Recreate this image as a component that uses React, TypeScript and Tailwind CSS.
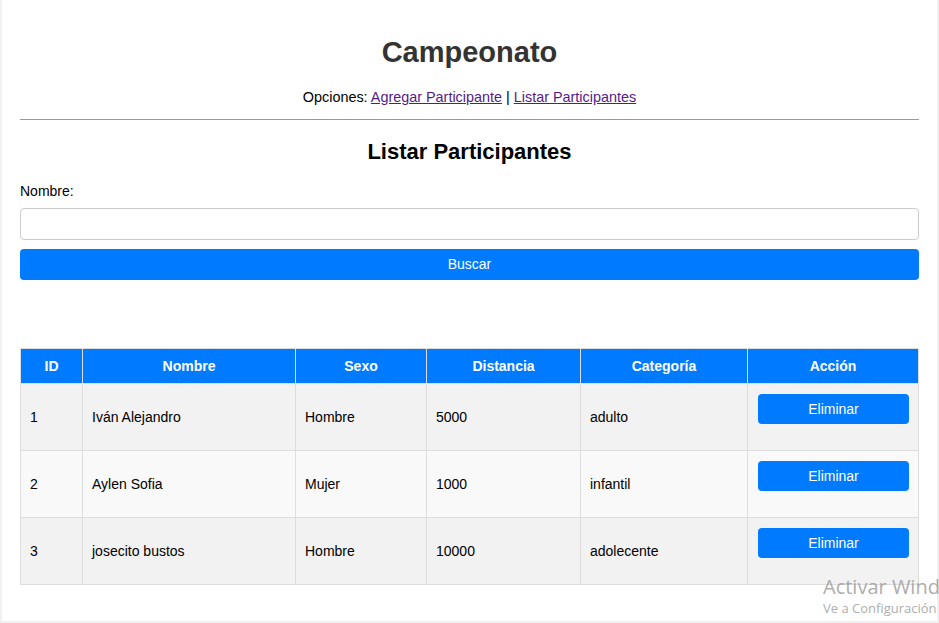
const participantes = [
  { id: 1, nombre: "Iván Alejandro", sexo: "Hombre", distancia: 5000, categoria: "adulto" },
  { id: 2, nombre: "Aylen Sofia", sexo: "Mujer", distancia: 1000, categoria: "infantil" },
  { id: 3, nombre: "josecito bustos", sexo: "Hombre", distancia: 10000, categoria: "adolecente" },
];

export default function App() {
  return (
    <div
      className="relative w-full h-[623px] overflow-hidden bg-[#f0f0f0] px-[2px]"
      style={{ fontFamily: '"Liberation Sans", Arial, sans-serif' }}
    >
      <div className="bg-white h-[621px] px-[18px] pt-[36px]">
        {/* HEADER */}
        <h1 className="text-center text-[29px] leading-[32px] font-bold text-[#333]">Campeonato</h1>
        <p className="mt-[21px] text-center text-[14.4px] leading-[16px] text-black">
          Opciones:{" "}
          <a href="#agregar" className="text-[#551a8b] underline">Agregar Participante</a>
          {" | "}
          <a href="#listar" className="text-[#551a8b] underline">Listar Participantes</a>
        </p>
        <hr className="mt-[14px] border-0 border-t border-[#999]" />

        {/* FORM */}
        <h2 className="mt-[19px] text-center text-[22px] leading-[26px] font-bold text-black">
          Listar Participantes
        </h2>
        <label className="block mt-[18px] text-[14px] leading-[16px] text-black">Nombre:</label>
        <input
          type="text"
          className="block w-full mt-[9px] h-[32px] rounded-[4px] border border-[#ccc] bg-white px-2 outline-none"
        />
        <button className="block w-full mt-[9px] h-[31px] rounded-[4px] bg-[#007bff] text-white text-[14px]">
          Buscar
        </button>

        {/* TABLE */}
        <table className="mt-[68px] w-full table-fixed border-collapse text-[14px] leading-[16px]">
          <colgroup>
            <col className="w-[62px]" />
            <col className="w-[213px]" />
            <col className="w-[131px]" />
            <col className="w-[154px]" />
            <col className="w-[167px]" />
            <col />
          </colgroup>
          <thead>
            <tr className="h-[35px] bg-[#007bff] text-white">
              {["ID", "Nombre", "Sexo", "Distancia", "Categoría", "Acción"].map((h) => (
                <th key={h} className="border border-[#ddd] px-[10px] font-bold text-center">
                  {h}
                </th>
              ))}
            </tr>
          </thead>
          <tbody className="text-black">
            {participantes.map((p, i) => (
              <tr key={p.id} className={i % 2 === 1 ? "bg-[#f9f9f9]" : "bg-[#f2f2f2]"}>
                <td className="border border-[#ddd] py-[10px] pl-[9px] pr-[10px] align-middle">{p.id}</td>
                <td className="border border-[#ddd] py-[10px] pl-[9px] pr-[10px] align-middle">{p.nombre}</td>
                <td className="border border-[#ddd] py-[10px] pl-[9px] pr-[10px] align-middle">{p.sexo}</td>
                <td className="border border-[#ddd] py-[10px] pl-[9px] pr-[10px] align-middle">{p.distancia}</td>
                <td className="border border-[#ddd] py-[10px] pl-[9px] pr-[10px] align-middle">{p.categoria}</td>
                <td className="border border-[#ddd] pt-[10px] pb-[10px] pl-[10px] pr-[9px] align-middle">
                  <button className="block w-full h-[30px] mb-[16px] rounded-[4px] bg-[#007bff] text-white text-[14px]">
                    Eliminar
                  </button>
                </td>
              </tr>
            ))}
          </tbody>
        </table>
      </div>

      {/* WINDOWS WATERMARK */}
      <div
        className="absolute left-[823px] top-[574px] whitespace-nowrap text-[#9a9a9a] opacity-80 pointer-events-none"
        style={{ fontFamily: '"Open Sans", "Noto Sans", sans-serif' }}
      >
        <div className="text-[20px] leading-[26px]">Activar Windows</div>
        <div className="text-[13px] leading-[18px] mt-[-1px]">Ve a Configuración para activar Windows.</div>
      </div>
    </div>
  );
}
